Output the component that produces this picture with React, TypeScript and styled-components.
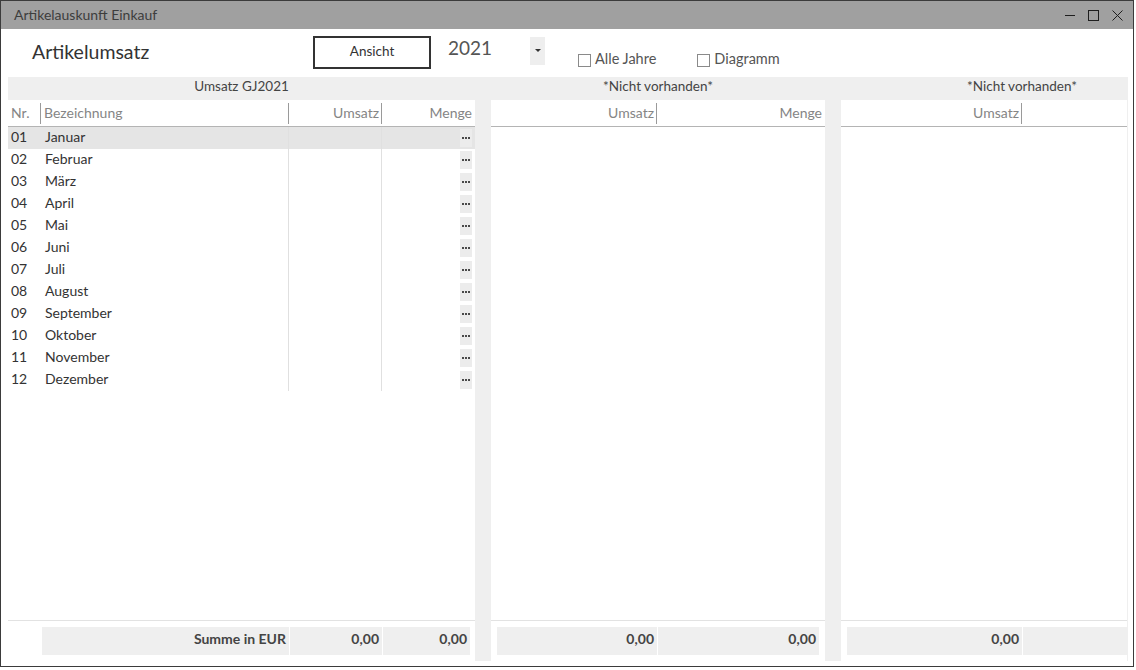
import React from "react";
import styled, { createGlobalStyle } from "styled-components";

const GlobalStyle = createGlobalStyle`
  html, body { margin: 0; padding: 0; background: #fff; }
  body { font-family: Lato, "Open Sans", "Liberation Sans", sans-serif; color: #333; }
  * { box-sizing: border-box; }
`;

const Window = styled.div`
  width: 1134px;
  height: 667px;
  border: 1px solid #3b3b3b;
  background: #fff;
  display: flex;
  flex-direction: column;
`;

const TitleBar = styled.div`
  height: 28px;
  flex: 0 0 28px;
  background: #a0a0a0;
  display: flex;
  align-items: center;
  padding: 0 10px 2px 13px;
  color: #3d3d3d;
  font-size: 14px;
`;

const TitleText = styled.div`
  flex: 1;
`;

const Controls = styled.div`
  display: flex;
  align-items: center;
  gap: 13px;
  margin-top: 2px;
`;

const Toolbar = styled.div`
  height: 48px;
  flex: 0 0 48px;
  display: flex;
  align-items: flex-start;
  padding-left: 31px;
`;

const Heading = styled.div`
  flex: 0 0 281px;
  margin-top: 11px;
  font-size: 19.5px;
  line-height: 24px;
  color: #333;
`;

const ViewButton = styled.div`
  width: 118px;
  height: 33px;
  margin-top: 7px;
  border: 2px solid #333;
  display: flex;
  align-items: center;
  justify-content: center;
  padding-bottom: 3px;
  font-size: 13.5px;
  color: #333;
`;

const Year = styled.div`
  width: 82px;
  margin-left: 17px;
  margin-top: 7px;
  font-size: 19px;
  line-height: 24px;
  color: #555;
`;

const DropButton = styled.div`
  width: 15px;
  height: 28px;
  margin-top: 8px;
  background: #eee;
  display: flex;
  align-items: center;
  justify-content: center;
`;

const Caret = styled.span`
  width: 0;
  height: 0;
  border-left: 3px solid transparent;
  border-right: 3px solid transparent;
  border-top: 3px solid #333;
  margin-bottom: 2px;
`;

const CheckGroup = styled.label<{ $ml: number }>`
  display: flex;
  align-items: center;
  gap: 4px;
  margin-left: ${(p) => p.$ml}px;
  margin-top: 20px;
  font-size: 14.5px;
  line-height: 20px;
  color: #555;
`;

const CheckBox = styled.span`
  width: 13px;
  height: 13px;
  margin-top: 2px;
  border: 1px solid #8a8a8a;
  background: #fff;
`;

const Main = styled.div`
  margin: 0 5px 0 7px;
  height: 584px;
  background: #efefef;
  display: grid;
  grid-template-columns: 467px 334px 286px;
  column-gap: 16px;
`;

const Panel = styled.div`
  display: flex;
  flex-direction: column;
  min-width: 0;
  overflow: hidden;
`;

const PanelInner = styled.div<{ $w?: number }>`
  width: ${(p) => (p.$w ? `${p.$w}px` : "100%")};
  flex: 1;
  display: flex;
  flex-direction: column;
`;

const PanelTitle = styled.div`
  height: 23px;
  flex: 0 0 23px;
  line-height: 19px;
  text-align: center;
  font-size: 13.5px;
  color: #444;
`;

const PanelBody = styled.div`
  flex: 1;
  background: #fff;
  display: flex;
  flex-direction: column;
`;

const HeaderRow = styled.div<{ $cols: string }>`
  height: 27px;
  flex: 0 0 27px;
  border-bottom: 1px solid #b4b4b4;
  display: grid;
  grid-template-columns: ${(p) => p.$cols};
  align-items: center;
`;

const HeadCell = styled.div<{ $right?: boolean; $divider?: boolean }>`
  height: 21px;
  line-height: 19px;
  font-size: 14px;
  color: #858585;
  text-align: ${(p) => (p.$right ? "right" : "left")};
  padding: ${(p) => (p.$right ? "0 2px 0 0" : "0 0 0 3px")};
  border-right: 1px solid ${(p) => (p.$divider ? "#9a9a9a" : "transparent")};
  white-space: nowrap;
  overflow: hidden;
`;

const Rows = styled.div`
  flex: 1;
`;

const Row = styled.div<{ $cols: string; $active?: boolean }>`
  height: 22px;
  display: grid;
  grid-template-columns: ${(p) => p.$cols};
  background: ${(p) => (p.$active ? "#e5e5e5" : "transparent")};
`;

const Cell = styled.div<{ $pl?: number; $divider?: boolean; $end?: boolean }>`
  display: flex;
  align-items: center;
  justify-content: ${(p) => (p.$end ? "flex-end" : "flex-start")};
  padding-left: ${(p) => p.$pl ?? 0}px;
  padding-right: ${(p) => (p.$end ? 2 : 0)}px;
  padding-bottom: ${(p) => (p.$end ? 0 : 3)}px;
  font-size: 14px;
  color: #333;
  border-right: 1px solid ${(p) => (p.$divider ? "#e0e0e0" : "transparent")};
`;

const DotsButton = styled.span`
  width: 12px;
  height: 18px;
  background: #ececec;
  display: flex;
  align-items: center;
  justify-content: center;
  gap: 1px;
`;

const Dot = styled.span`
  width: 2px;
  height: 2px;
  background: #4a4a4a;
`;

const Footer = styled.div<{ $pl: number }>`
  height: 41px;
  flex: 0 0 41px;
  border-top: 1px solid #e2e2e2;
  padding: 6px 0 6px ${(p) => p.$pl}px;
  display: flex;
  gap: 1px;
`;

const FootCell = styled.div<{ $w: number }>`
  flex: 0 0 ${(p) => p.$w}px;
  height: 28px;
  background: #efefef;
  display: flex;
  align-items: center;
  justify-content: flex-end;
  padding: 0 3px 5px 0;
  font-size: 14px;
  font-weight: 700;
  color: #444;
`;

const months = [
  "Januar",
  "Februar",
  "März",
  "April",
  "Mai",
  "Juni",
  "Juli",
  "August",
  "September",
  "Oktober",
  "November",
  "Dezember",
];

const COLS1 = "33px 248px 93px 93px";

const MinIcon = () => (
  <svg width="11" height="11" viewBox="0 0 11 11">
    <line x1="1" y1="5.5" x2="11" y2="5.5" stroke="#1e1e1e" strokeWidth="1" />
  </svg>
);
const MaxIcon = () => (
  <svg width="11" height="11" viewBox="0 0 11 11">
    <rect x="0.5" y="0.5" width="10" height="10" fill="none" stroke="#1e1e1e" strokeWidth="1" />
  </svg>
);
const CloseIcon = () => (
  <svg width="11" height="11" viewBox="0 0 11 11">
    <path d="M0.5 0.5 L10.5 10.5 M10.5 0.5 L0.5 10.5" stroke="#1e1e1e" strokeWidth="1" fill="none" />
  </svg>
);

export default function App() {
  return (
    <>
      <GlobalStyle />
      <Window>
        <TitleBar>
          <TitleText>Artikelauskunft Einkauf</TitleText>
          <Controls>
            <MinIcon />
            <MaxIcon />
            <CloseIcon />
          </Controls>
        </TitleBar>
        <Toolbar>
          <Heading>Artikelumsatz</Heading>
          <ViewButton>Ansicht</ViewButton>
          <Year>2021</Year>
          <DropButton>
            <Caret />
          </DropButton>
          <CheckGroup $ml={33}>
            <CheckBox />
            Alle Jahre
          </CheckGroup>
          <CheckGroup $ml={41}>
            <CheckBox />
            Diagramm
          </CheckGroup>
        </Toolbar>
        <Main>
          <Panel>
            <PanelInner>
              <PanelTitle>Umsatz GJ2021</PanelTitle>
              <PanelBody>
                <HeaderRow $cols={COLS1}>
                  <HeadCell $divider>Nr.</HeadCell>
                  <HeadCell $divider>Bezeichnung</HeadCell>
                  <HeadCell $right $divider>Umsatz</HeadCell>
                  <HeadCell $right>Menge</HeadCell>
                </HeaderRow>
                <Rows>
                  {months.map((m, i) => (
                    <Row key={m} $cols={COLS1} $active={i === 0}>
                      <Cell $pl={3}>{String(i + 1).padStart(2, "0")}</Cell>
                      <Cell $pl={4} $divider>
                        {m}
                      </Cell>
                      <Cell $divider />
                      <Cell $end>
                        <DotsButton>
                          <Dot />
                          <Dot />
                          <Dot />
                        </DotsButton>
                      </Cell>
                    </Row>
                  ))}
                </Rows>
                <Footer $pl={34}>
                  <FootCell $w={247}>Summe in EUR</FootCell>
                  <FootCell $w={92}>0,00</FootCell>
                  <FootCell $w={87}>0,00</FootCell>
                </Footer>
              </PanelBody>
            </PanelInner>
          </Panel>
          <Panel>
            <PanelInner>
              <PanelTitle>*Nicht vorhanden*</PanelTitle>
              <PanelBody>
                <HeaderRow $cols="166px 168px">
                  <HeadCell $right $divider>Umsatz</HeadCell>
                  <HeadCell $right>Menge</HeadCell>
                </HeaderRow>
                <Rows />
                <Footer $pl={6}>
                  <FootCell $w={160}>0,00</FootCell>
                  <FootCell $w={161}>0,00</FootCell>
                </Footer>
              </PanelBody>
            </PanelInner>
          </Panel>
          <Panel>
            <PanelInner $w={362}>
              <PanelTitle>*Nicht vorhanden*</PanelTitle>
              <PanelBody>
                <HeaderRow $cols="181px 181px">
                  <HeadCell $right $divider>Umsatz</HeadCell>
                  <HeadCell $right />
                </HeaderRow>
                <Rows />
                <Footer $pl={6}>
                  <FootCell $w={175}>0,00</FootCell>
                  <FootCell $w={175} />
                </Footer>
              </PanelBody>
            </PanelInner>
          </Panel>
        </Main>
      </Window>
    </>
  );
}
